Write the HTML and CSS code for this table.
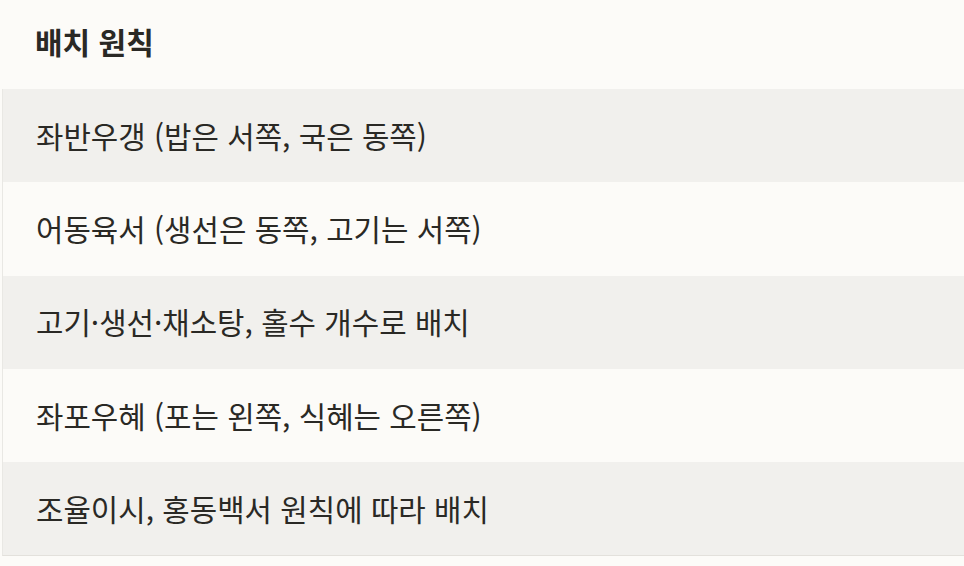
FILE: index.html
```html
<!DOCTYPE html>
<html lang="ko">
<head>
<meta charset="utf-8">
<link rel="stylesheet" href="styles.css">
</head>
<body>
<div class="table">
  <div class="head">배치 원칙</div>
  <div class="row alt">좌반우갱 (밥은 서쪽, 국은 동쪽)</div>
  <div class="row">어동육서 (생선은 동쪽, 고기는 서쪽)</div>
  <div class="row alt">고기·생선·채소탕, 홀수 개수로 배치</div>
  <div class="row">좌포우혜 (포는 왼쪽, 식혜는 오른쪽)</div>
  <div class="row alt last">조율이시, 홍동백서 원칙에 따라 배치</div>
</div>
</body>
</html>
```
FILE: styles.css
```css
html, body {
  margin: 0;
  padding: 0;
  background: #fcfbf8;
}
body {
  font-family: "Noto Sans CJK KR", "Noto Sans", sans-serif;
  color: #2a2925;
  width: 964px;
  height: 566px;
  overflow: hidden;
}
.table {
  display: flex;
  flex-direction: column;
  margin-left: 2px;
}
.head {
  height: 89px;
  display: flex;
  align-items: center;
  padding-left: 33px;
  padding-bottom: 8px;
  box-sizing: border-box;
  font-size: 30px;
  font-weight: 700;
}
.row {
  height: 93.3px;
  display: flex;
  align-items: center;
  padding-left: 33px;
  padding-bottom: 2px;
  font-size: 29.8px;
  border-left: 1px solid #e9e8e4;
  box-sizing: border-box;
}
.alt {
  background: #f1f0ed;
}
.last {
  border-bottom: 1px solid #e3e1dc;
  height: 94px;
}
```
